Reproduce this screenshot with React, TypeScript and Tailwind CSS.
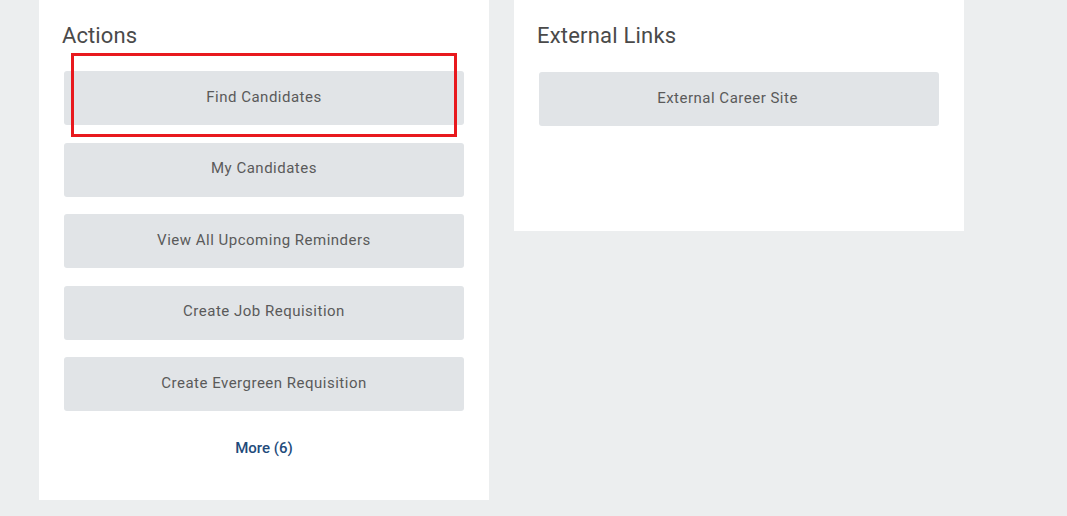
import React from "react";

const actions = [
  "Find Candidates",
  "My Candidates",
  "View All Upcoming Reminders",
  "Create Job Requisition",
  "Create Evergreen Requisition",
];

function ActionButton({ label, extra = "" }: { label: string; extra?: string }) {
  return (
    <div
      className={
        "mx-[2px] flex h-[54px] items-center justify-center rounded-[3px] bg-[#e1e4e7] pb-[2px] text-[15px] tracking-[0.5px] text-[#5a5a5a] " +
        extra
      }
    >
      {label}
    </div>
  );
}

export default function App() {
  return (
    <div
      className="relative h-[516px] w-full overflow-hidden bg-[#eceeef]"
      style={{ fontFamily: "Roboto, 'Liberation Sans', sans-serif" }}
    >
      <div className="flex items-start gap-[25px] pl-[39px]">
        <div className="flex h-[500px] w-[450px] flex-col bg-white px-[23px] pt-[21.5px]">
          <h2 className="text-[22px] leading-[28px] tracking-[0.1px] text-[#4a4a4a]">Actions</h2>
          <div className="mt-[21.5px] flex flex-col gap-[17.5px]">
            {actions.map((a) => (
              <ActionButton key={a} label={a} />
            ))}
          </div>
          <div className="mt-[26.5px] text-center text-[15px] font-medium leading-[20px] text-[#1f4b7b]">
            More (6)
          </div>
        </div>
        <div className="flex h-[231px] w-[450px] flex-col bg-white px-[23px] pt-[21.5px]">
          <h2 className="text-[22px] leading-[28px] tracking-[0.2px] text-[#4a4a4a]">External Links</h2>
          <div className="mt-[22.5px] flex flex-col">
            <ActionButton label="External Career Site" extra="pr-[23px]" />
          </div>
        </div>
      </div>
      <div className="pointer-events-none absolute left-[71px] top-[53px] h-[84px] w-[386px] border-[3px] border-[#e8191e]" />
    </div>
  );
}
